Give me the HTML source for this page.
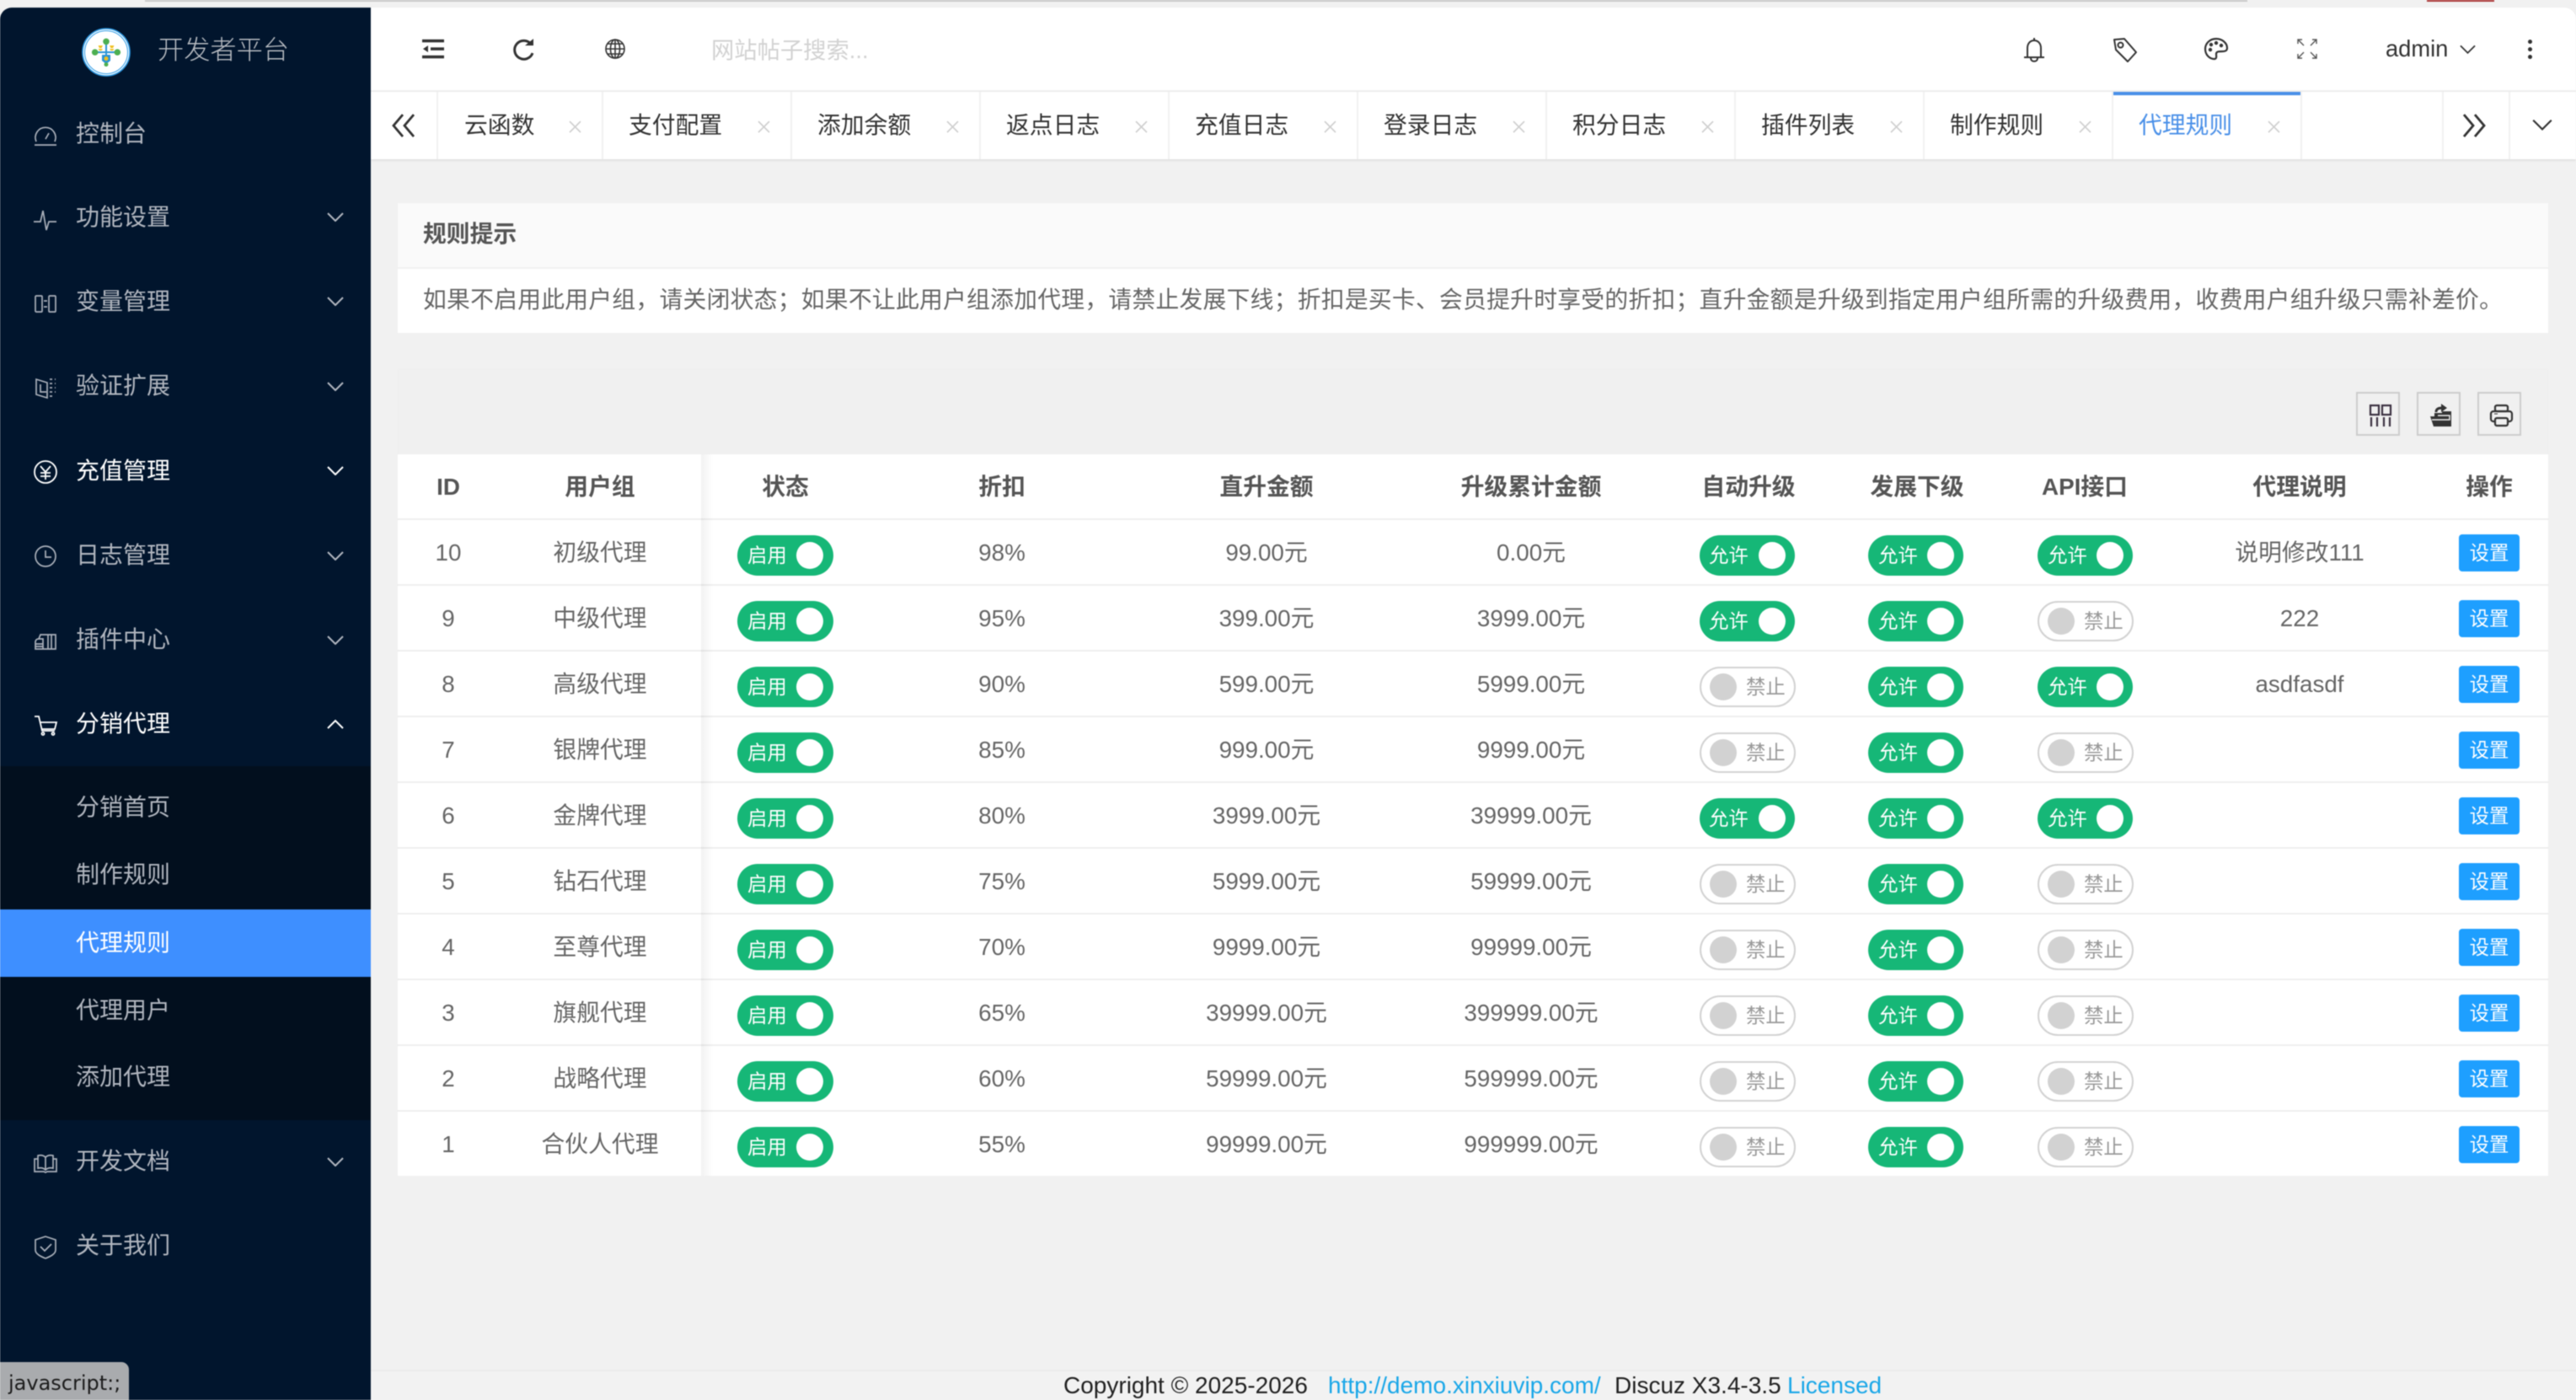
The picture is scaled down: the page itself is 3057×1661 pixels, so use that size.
<!DOCTYPE html>
<html lang="zh-CN"><head><meta charset="utf-8"><title>开发者平台</title>
<style>
*{box-sizing:border-box}
html,body{margin:0;padding:0;width:3057px;height:1661px;overflow:hidden;background:#f1f1f1}
body{font-family:"Liberation Sans","Noto Sans CJK SC",sans-serif;position:relative;color:#666}
#root{position:absolute;left:0;top:0;width:3057px;height:1661px;overflow:hidden;filter:blur(.6px)}
.a{position:absolute}
.t{position:absolute;white-space:nowrap;line-height:40px;height:40px;font-size:27.8px}
svg{position:absolute;overflow:visible;fill:none}
.m{color:#b1b6bf;left:90px;font-size:28px}
.w{color:#fff}
.mi{stroke:#aab0ba;stroke-width:1.700}
.chev{left:388px;width:20px;height:11px;stroke:#b1b6bf;stroke-width:2}
.tab{position:absolute;top:109px;height:80px;border-right:2px solid #f2f2f2}
.tab span{position:absolute;left:30px;top:21px;line-height:38px;font-size:27.8px;color:#333;white-space:nowrap}
.tab svg{right:24px;top:34px;width:15px;height:15px;stroke:#cfcfcf;stroke-width:1.6}
.hi{stroke:#333;stroke-width:2}
.row{position:absolute;left:472px;width:2552px;height:76px;background:#fff}
.c{position:absolute;top:1px;height:76px;line-height:76px;transform:translateX(-50%);white-space:nowrap;font-size:27.8px;color:#666}
.h .c{font-weight:700;color:#555}
.c1{left:60px}.c2{left:240px}.c3{left:460px}.c4{left:717px}.c5{left:1031px}.c6{left:1345px}.c7{left:1603px}.c8{left:1803px}.c9{left:2002px}.c10{left:2257px}.c11{left:2482px}
.sw{position:absolute;top:18px;width:113px;height:48px;border-radius:24px;font-style:normal;font-size:23.4px;line-height:46px;display:block}
.sw b{position:absolute;top:8px;width:32px;height:32px;border-radius:50%;background:#fff}
.sw em{position:absolute;font-style:normal;top:1px;white-space:nowrap}
.on{background:#16b777;color:#fff}.on b{left:70px}.on em{left:12px}
.off{background:#fff;border:2px solid #d2d2d2;color:#999;width:114px}.off b{left:10px;top:6px;background:#d2d2d2}.off em{left:53px;top:-1px}
.s0{left:403px;width:114px}.s1{left:1545px}.s1.on em{left:11px}.s2{left:1745px}.s3{left:1946px}
.bt{position:absolute;left:2446px;top:17px;width:72px;height:44px;border-radius:4px;background:#1e9fff;color:#fff;font-size:23.4px;line-height:45px;text-align:center}
.tb{position:absolute;top:465px;width:52px;height:52px;border:2px solid #ccc}
</style></head><body><div id="root">
<svg width="0" height="0" style="position:absolute"><defs>
<symbol id="x" viewBox="0 0 15 15"><path d="M1 1L14 14M14 1L1 14"/></symbol>
<symbol id="dn" viewBox="0 0 20 11"><path d="M1 1L10 10L19 1"/></symbol>
</defs></svg>

<!-- top strip -->
<div class="a" style="left:172px;top:0;width:2495px;height:2px;background:#c9c9c9"></div>
<div class="a" style="left:2880px;top:0;width:80px;height:2px;background:#a33"></div>

<!-- header -->
<div class="a" style="left:440px;top:9px;width:2617px;height:100px;background:#fff;border-bottom:2px solid #f0f0f0;border-top-right-radius:14px"></div>
<svg style="left:500px;top:46px" width="28" height="24"><path d="M1 2.5H27M1 21.500H27M11 12H27" stroke="#333" stroke-width="3.400"/><path d="M8 8L2 12L8 16Z" fill="#333"/></svg>
<svg style="left:609px;top:46px" width="26" height="26" class="hi"><path d="M21 6A11 11 0 1 0 23 17" stroke-width="3" stroke="#333"/><path d="M14 8L24 8L24 0Z" fill="#333" stroke="none"/></svg>
<svg style="left:718px;top:46px" width="24" height="24" stroke="#333" stroke-width="1.600"><circle cx="12" cy="12" r="11"/><ellipse cx="12" cy="12" rx="5.500" ry="11"/><path d="M12 1V23M1 12H23M3 6H21M3 18H21"/></svg>
<div class="t" style="left:844px;top:40px;color:#d2d2d2;font-size:27.300px">网站帖子搜索...</div>

<svg style="left:2401px;top:44px" width="26" height="30" stroke="#333" stroke-width="2"><path d="M13 1V4M5 23V13C5 8 8 4 13 4C18 4 21 8 21 13V23M1 24H25M9 25C9 30 17 30 17 25"/></svg>
<svg style="left:2507px;top:44px" width="30" height="30" stroke="#333" stroke-width="2"><path d="M2 3L14 2L28 18L18 29L4 15Z" stroke-linejoin="round"/><circle cx="9.500" cy="9.500" r="3"/></svg>
<svg style="left:2616px;top:45px" width="28" height="26" stroke="#333" stroke-width="2.200"><path d="M14 1C6 1 1 7 1 13C1 20 6 25 12 25C15 25 14 21 14 19C14 16 17 16 21 16C25 16 27 15 27 12C27 6 21 1 14 1Z"/><g fill="#333" stroke="none"><circle cx="7" cy="14" r="2.200"/><circle cx="8" cy="8" r="2.200"/><circle cx="14" cy="6" r="2.200"/><circle cx="20" cy="9" r="2.200"/></g></svg>
<svg style="left:2726px;top:46px" width="24" height="24" stroke="#555" stroke-width="1.400"><path d="M1 6V1H6M1 1L8 8M18 1H23V6M23 1L16 8M1 18V23H6M1 23L8 16M23 18V23H18M23 23L16 16"/></svg>
<div class="t" style="left:2831px;top:38px;color:#333;font-size:27.300px">admin</div>
<svg style="left:2919px;top:53px;width:19px;height:11px" stroke="#333" stroke-width="1.800"><use href="#dn"/></svg>
<div class="a" style="left:3000px;top:47px;width:5px;height:5px;border-radius:50%;background:#333"></div>
<div class="a" style="left:3000px;top:56px;width:5px;height:5px;border-radius:50%;background:#333"></div>
<div class="a" style="left:3000px;top:65px;width:5px;height:5px;border-radius:50%;background:#333"></div>

<!-- tabs -->
<div class="a" style="left:440px;top:109px;width:2617px;height:80px;background:#fff;box-shadow:0 1px 3px rgba(0,0,0,.12)"></div>
<svg style="left:465px;top:135px" width="28" height="28" stroke="#333" stroke-width="2.800"><path d="M13 1L2 14L13 27M26 1L15 14L26 27"/></svg>
<div class="a" style="left:518px;top:109px;width:2px;height:80px;background:#f2f2f2"></div>
<div class="tab" style="left:520px;width:196px"><span style="left:31px">云函数</span><svg stroke="#cfcfcf"><use href="#x"/></svg></div>
<div class="tab" style="left:716px;width:224px"><span>支付配置</span><svg><use href="#x"/></svg></div>
<div class="tab" style="left:940px;width:224px"><span>添加余额</span><svg><use href="#x"/></svg></div>
<div class="tab" style="left:1164px;width:224px"><span>返点日志</span><svg><use href="#x"/></svg></div>
<div class="tab" style="left:1388px;width:224px"><span>充值日志</span><svg><use href="#x"/></svg></div>
<div class="tab" style="left:1612px;width:224px"><span>登录日志</span><svg><use href="#x"/></svg></div>
<div class="tab" style="left:1836px;width:224px"><span>积分日志</span><svg><use href="#x"/></svg></div>
<div class="tab" style="left:2060px;width:224px"><span>插件列表</span><svg><use href="#x"/></svg></div>
<div class="tab" style="left:2284px;width:224px"><span>制作规则</span><svg><use href="#x"/></svg></div>
<div class="tab" style="left:2508px;width:224px"><span style="color:#4a90e8">代理规则</span><svg><use href="#x"/></svg></div>
<div class="a" style="left:2508px;top:109px;width:222px;height:4px;background:#4a90e8"></div>
<div class="a" style="left:2898px;top:109px;width:2px;height:80px;background:#f2f2f2"></div>
<div class="a" style="left:2977px;top:109px;width:2px;height:80px;background:#f2f2f2"></div>
<svg style="left:2922px;top:135px" width="28" height="28" stroke="#333" stroke-width="2.800"><path d="M2 1L13 14L2 27M15 1L26 14L15 27"/></svg>
<svg style="left:3005px;top:141px;width:24px;height:14px" stroke="#333" stroke-width="1.800"><use href="#dn"/></svg>

<!-- sidebar -->
<div class="a" style="left:0;top:9px;width:440px;height:1652px;background:#01152d;border-top-left-radius:14px"></div>
<svg style="left:97px;top:33px" width="58" height="58" viewBox="0 0 58 58"><circle cx="29" cy="29" r="28" fill="#fff" stroke="#2e9be6" stroke-width="1.600"/><circle cx="29" cy="29" r="25.500" fill="none" stroke="#2e9be6" stroke-width="1"/><path d="M29 16V34M16 29H42" stroke="#2a94d6" stroke-width="2"/><path d="M24 32H34V39L29 43L24 39Z" fill="#2a94d6"/><circle cx="29" cy="16.300" r="3.800" fill="#4caf50"/><circle cx="15.700" cy="29" r="3.800" fill="#4caf50"/><circle cx="42.300" cy="29" r="3.800" fill="#4caf50"/><circle cx="29" cy="43.500" r="2.500" fill="#4caf50"/><circle cx="29" cy="36.500" r="2.500" fill="#f0c020"/><path d="M19.500 22H25L23.500 25H21ZM21 28H23.500L25 26H19.500ZM33 22H38.500L37 25H34.500ZM34.500 28H37L38.500 26H33Z" fill="#f0c020" transform="translate(0 -1)"/></svg>
<div class="t" style="left:187px;top:40px;color:#b8bcc2;font-size:31.200px;font-weight:300">开发者平台</div>

<div class="t m" style="top:139px">控制台</div>
<div class="t m" style="top:238px">功能设置</div>
<div class="t m" style="top:338px">变量管理</div>
<div class="t m" style="top:438px">验证扩展</div>
<div class="t m w" style="top:539px">充值管理</div>
<div class="t m" style="top:639px">日志管理</div>
<div class="t m" style="top:739px">插件中心</div>
<div class="t m w" style="top:839px">分销代理</div>

<svg class="mi" style="left:40px;top:149px" width="28" height="24"><path d="M3 19A12 12 0 1 1 25 19M1 23H27M14 16L18 9"/></svg>
<svg class="mi" style="left:40px;top:248px" width="27" height="26"><path d="M0 15H8L11 2L15 25L18 15H27"/></svg>
<svg class="mi" style="left:41px;top:350px" width="26" height="21"><rect x="1" y="1" width="8" height="19" rx="1"/><rect x="17" y="1" width="8" height="19" rx="1"/><path d="M11 7H15M11 14H15"/></svg>
<svg class="mi" style="left:42px;top:448px" width="25" height="25"><path d="M1 2L14 6V24L1 20ZM6 8V17H13"/><path d="M17 2H24M17 7H24M17 12H24M17 17H24M17 22H22" stroke-dasharray="3 3"/></svg>
<svg stroke="#fff" stroke-width="1.800" style="left:40px;top:546px" width="28" height="28"><circle cx="14" cy="14" r="13"/><path d="M8 7L14 14L20 7M14 14V23M8 15H20M8 19H20"/></svg>
<svg class="mi" style="left:41px;top:647px" width="26" height="26"><circle cx="13" cy="13" r="12"/><path d="M13 6V14H20"/></svg>
<svg class="mi" style="left:41px;top:751px" width="26" height="20"><path d="M1 19V11C1 8 3 7 5 7H10V19ZM1 13H10M1 16H10M5 7L7 2H16V19H10M16 2H25V19H16M20 2V19"/></svg>
<svg stroke="#fff" stroke-width="1.800" style="left:41px;top:849px" width="27" height="24"><path d="M0 1H5L9 18H24M7 8H26L24 16H9"/><circle cx="10" cy="21.500" r="1.500"/><circle cx="22" cy="21.500" r="1.500"/></svg>

<svg class="chev" style="top:252px;position:absolute"><use href="#dn"/></svg>
<svg class="chev" style="top:352px;position:absolute"><use href="#dn"/></svg>
<svg class="chev" style="top:453px;position:absolute"><use href="#dn"/></svg>
<svg class="chev" style="top:553px;position:absolute;stroke:#fff"><use href="#dn"/></svg>
<svg class="chev" style="top:654px;position:absolute"><use href="#dn"/></svg>
<svg class="chev" style="top:754px;position:absolute"><use href="#dn"/></svg>
<svg style="left:388px;top:854px;width:20px;height:11px;stroke:#fff;stroke-width:2"><path d="M1 10L10 1L19 10"/></svg>

<div class="a" style="left:0;top:909px;width:440px;height:420px;background:#020f1e"></div>
<div class="a" style="left:0;top:1079px;width:440px;height:80px;background:#3e8fff"></div>
<div class="t m" style="top:938px">分销首页</div>
<div class="t m" style="top:1018px">制作规则</div>
<div class="t m w" style="top:1099px">代理规则</div>
<div class="t m" style="top:1179px">代理用户</div>
<div class="t m" style="top:1258px">添加代理</div>
<div class="t m" style="top:1358px">开发文档</div>
<div class="t m" style="top:1458px">关于我们</div>
<svg class="mi" style="left:39px;top:1369px" width="30" height="23"><path d="M6 2C10 1 13 2 15 4C17 2 20 1 24 2V17C20 16 17 17 15 19C13 17 10 16 6 17ZM15 4V19M6 6H2V21H13L15 22L17 21H28V6H24"/></svg>
<svg class="mi" style="left:41px;top:1466px" width="26" height="28"><path d="M13 1L25 5V17C25 22 18 25 13 27C8 25 1 22 1 17V5ZM7 13L12 18L20 10"/></svg>
<svg class="chev" style="top:1373px;position:absolute"><use href="#dn"/></svg>

<!-- tooltip -->
<div class="a" style="left:0;top:1616px;width:153px;height:45px;background:#a9abae;border-top-right-radius:9px;color:#1c1c1c;line-height:50px;padding-left:10px;font-family:'DejaVu Sans','Liberation Sans',sans-serif;font-size:24px;white-space:nowrap">javascript:;</div>

<!-- panel -->
<div class="a" style="left:472px;top:241px;width:2552px;height:76px;background:#fafafa"></div>
<div class="a" style="left:472px;top:319px;width:2552px;height:76px;background:#fff"></div>
<div class="t" style="left:502px;top:258px;font-weight:700;color:#555">规则提示</div>
<div class="t" style="left:502px;top:336px;color:#666;letter-spacing:.25px">如果不启用此用户组，请关闭状态；如果不让此用户组添加代理，请禁止发展下线；折扣是买卡、会员提升时享受的折扣；直升金额是升级到指定用户组所需的升级费用，收费用户组升级只需补差价。</div>

<!-- toolbar -->
<div class="a" style="left:472px;top:438px;width:2552px;height:101px;background:#f0f0f0;border:1px solid #eee"></div>
<div class="tb" style="left:2796px"></div><div class="tb" style="left:2868px"></div><div class="tb" style="left:2940px"></div>
<svg style="left:2812px;top:480px" width="26" height="26" stroke="#3a3040" stroke-width="2.200"><rect x="1" y="1" width="10" height="11"/><rect x="15" y="1" width="10" height="11"/><path d="M2 15V26M9 15V26M17 15V26M24 15V26"/></svg>
<svg style="left:2884px;top:479px" width="26" height="28"><path d="M4 27L0 15H5V11H14V9H25V27Z" fill="#333"/><path d="M7 10C7 6 10 5 14 5" stroke="#333" stroke-width="3"/><path d="M13 0L20 5L13 10Z" fill="#333"/><path d="M9 14H23V19H2" stroke="#f0f0f0" stroke-width="1.500"/></svg>
<svg style="left:2955px;top:480px" width="27" height="26" stroke="#333" stroke-width="2.200"><rect x="6" y="1" width="15" height="7" rx="2"/><rect x="1" y="8" width="25" height="12" rx="3"/><rect x="6" y="16" width="15" height="9" rx="2" fill="#f0f0f0"/><path d="M5 11H9" stroke-width="1"/></svg>

<!-- table -->
<div class="a" style="left:472px;top:539px;width:2552px;height:856px;background:#eee"></div>
<div class="row h" style="top:539px"><span class="c c1">ID</span><span class="c c2">用户组</span><span class="c c3">状态</span><span class="c c4">折扣</span><span class="c c5">直升金额</span><span class="c c6">升级累计金额</span><span class="c c7">自动升级</span><span class="c c8">发展下级</span><span class="c c9">API接口</span><span class="c c10">代理说明</span><span class="c c11">操作</span></div>

<div class="row" style="top:617px"><span class="c c1">10</span><span class="c c2">初级代理</span><i class="sw on s0"><em>启用</em><b></b></i><span class="c c4">98%</span><span class="c c5">99.00元</span><span class="c c6">0.00元</span><i class="sw on s1"><em>允许</em><b></b></i><i class="sw on s2"><em>允许</em><b></b></i><i class="sw on s3"><em>允许</em><b></b></i><span class="c c10">说明修改111</span><span class="bt">设置</span></div>
<div class="row" style="top:695px"><span class="c c1">9</span><span class="c c2">中级代理</span><i class="sw on s0"><em>启用</em><b></b></i><span class="c c4">95%</span><span class="c c5">399.00元</span><span class="c c6">3999.00元</span><i class="sw on s1"><em>允许</em><b></b></i><i class="sw on s2"><em>允许</em><b></b></i><i class="sw off s3"><b></b><em>禁止</em></i><span class="c c10">222</span><span class="bt">设置</span></div>
<div class="row" style="top:773px"><span class="c c1">8</span><span class="c c2">高级代理</span><i class="sw on s0"><em>启用</em><b></b></i><span class="c c4">90%</span><span class="c c5">599.00元</span><span class="c c6">5999.00元</span><i class="sw off s1"><b></b><em>禁止</em></i><i class="sw on s2"><em>允许</em><b></b></i><i class="sw on s3"><em>允许</em><b></b></i><span class="c c10">asdfasdf</span><span class="bt">设置</span></div>
<div class="row" style="top:851px"><span class="c c1">7</span><span class="c c2">银牌代理</span><i class="sw on s0"><em>启用</em><b></b></i><span class="c c4">85%</span><span class="c c5">999.00元</span><span class="c c6">9999.00元</span><i class="sw off s1"><b></b><em>禁止</em></i><i class="sw on s2"><em>允许</em><b></b></i><i class="sw off s3"><b></b><em>禁止</em></i><span class="bt">设置</span></div>
<div class="row" style="top:929px"><span class="c c1">6</span><span class="c c2">金牌代理</span><i class="sw on s0"><em>启用</em><b></b></i><span class="c c4">80%</span><span class="c c5">3999.00元</span><span class="c c6">39999.00元</span><i class="sw on s1"><em>允许</em><b></b></i><i class="sw on s2"><em>允许</em><b></b></i><i class="sw on s3"><em>允许</em><b></b></i><span class="bt">设置</span></div>
<div class="row" style="top:1007px"><span class="c c1">5</span><span class="c c2">钻石代理</span><i class="sw on s0"><em>启用</em><b></b></i><span class="c c4">75%</span><span class="c c5">5999.00元</span><span class="c c6">59999.00元</span><i class="sw off s1"><b></b><em>禁止</em></i><i class="sw on s2"><em>允许</em><b></b></i><i class="sw off s3"><b></b><em>禁止</em></i><span class="bt">设置</span></div>
<div class="row" style="top:1085px"><span class="c c1">4</span><span class="c c2">至尊代理</span><i class="sw on s0"><em>启用</em><b></b></i><span class="c c4">70%</span><span class="c c5">9999.00元</span><span class="c c6">99999.00元</span><i class="sw off s1"><b></b><em>禁止</em></i><i class="sw on s2"><em>允许</em><b></b></i><i class="sw off s3"><b></b><em>禁止</em></i><span class="bt">设置</span></div>
<div class="row" style="top:1163px"><span class="c c1">3</span><span class="c c2">旗舰代理</span><i class="sw on s0"><em>启用</em><b></b></i><span class="c c4">65%</span><span class="c c5">39999.00元</span><span class="c c6">399999.00元</span><i class="sw off s1"><b></b><em>禁止</em></i><i class="sw on s2"><em>允许</em><b></b></i><i class="sw off s3"><b></b><em>禁止</em></i><span class="bt">设置</span></div>
<div class="row" style="top:1241px"><span class="c c1">2</span><span class="c c2">战略代理</span><i class="sw on s0"><em>启用</em><b></b></i><span class="c c4">60%</span><span class="c c5">59999.00元</span><span class="c c6">599999.00元</span><i class="sw off s1"><b></b><em>禁止</em></i><i class="sw on s2"><em>允许</em><b></b></i><i class="sw off s3"><b></b><em>禁止</em></i><span class="bt">设置</span></div>
<div class="row" style="top:1319px"><span class="c c1">1</span><span class="c c2">合伙人代理</span><i class="sw on s0"><em>启用</em><b></b></i><span class="c c4">55%</span><span class="c c5">99999.00元</span><span class="c c6">999999.00元</span><i class="sw off s1"><b></b><em>禁止</em></i><i class="sw on s2"><em>允许</em><b></b></i><i class="sw off s3"><b></b><em>禁止</em></i><span class="bt">设置</span></div>
<div class="a" style="left:832px;top:539px;width:14px;height:856px;background:linear-gradient(90deg,rgba(0,0,0,.05),rgba(0,0,0,0))"></div>

<!-- footer -->
<div class="a" style="left:440px;top:1625px;width:2617px;height:36px;background:#f2f2f2;border-top:2px solid #ebebeb"></div>
<div class="t" style="left:1262px;top:1624px;color:#222;font-size:28px">Copyright © 2025-2026</div>
<div class="t" style="left:1576px;top:1624px;color:#1aa7e8;font-size:28px">http://demo.xinxiuvip.com/</div>
<div class="t" style="left:1916px;top:1624px;color:#222;font-size:28px">Discuz X3.4-3.5</div>
<div class="t" style="left:2121px;top:1624px;color:#1aa7e8;font-size:28px">Licensed</div>
</div></body></html>
